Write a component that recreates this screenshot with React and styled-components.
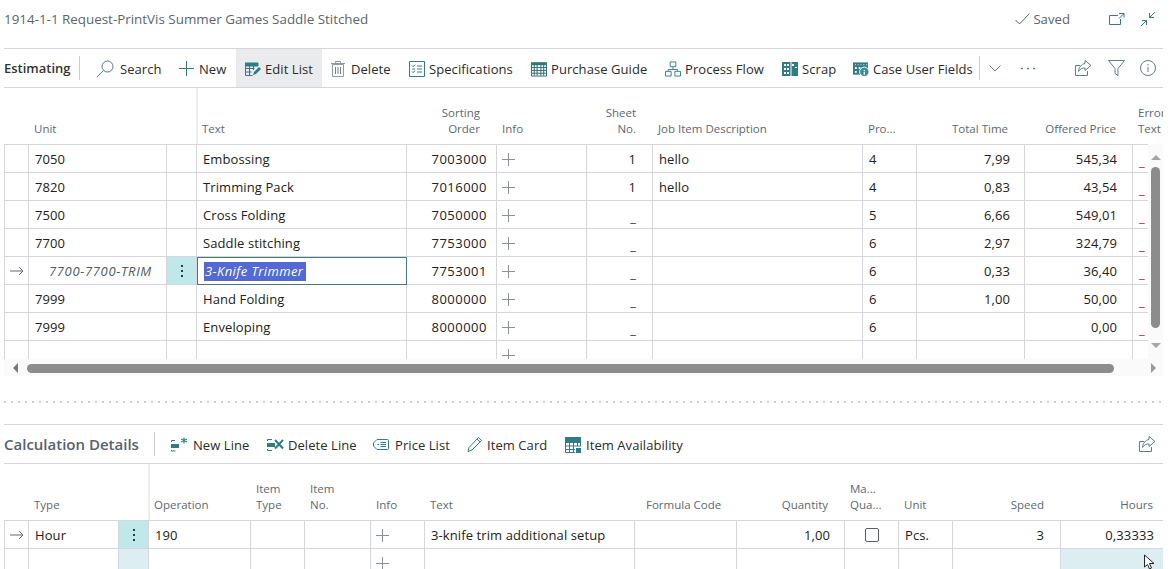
import React from "react";
import styled, { createGlobalStyle } from "styled-components";

const TEAL = "#2f7d84";
const LINE = "#d5d6de";
const SOFT = "#5d7f88";

const GlobalStyle = createGlobalStyle`
  html, body {
    margin: 0;
    background: #fff;
    font-family: "Open Sans", "Liberation Sans", sans-serif;
    color: #212121;
  }
`;

const Page = styled.div`
  position: relative;
  width: 1173px;
  height: 569px;
  padding: 0 10px 0 4px;
  box-sizing: border-box;
  overflow: hidden;
`;

const TitleBar = styled.div`
  height: 48px;
  display: flex;
  align-items: center;
  padding-bottom: 10px;
  box-sizing: border-box;
`;

const Title = styled.div`
  font-size: 13.4px;
  color: #5b6570;
  flex: 1;
`;

const Saved = styled.div`
  display: flex;
  align-items: center;
  gap: 3px;
  font-size: 13.2px;
  color: #5b6570;
  margin-right: 31px;
`;

const TitleIcon = styled.span`
  display: flex;
  width: 31px;
  justify-content: center;
`;

const Toolbar = styled.div`
  height: ${(p) => p.$height}px;
  display: flex;
  align-items: center;
  border-top: 1px solid ${LINE};
  border-bottom: 1px solid ${LINE};
  box-sizing: border-box;
`;

const SectionName = styled.div`
  width: ${(p) => p.$width}px;
  font-size: ${(p) => p.$size}px;
  font-weight: 600;
  color: ${(p) => p.$color};
  white-space: nowrap;
`;

const Divider = styled.div`
  width: 1px;
  height: 24px;
  background: #c9cbd2;
  margin-right: ${(p) => p.$after || 0}px;
`;

const Action = styled.div`
  width: ${(p) => p.$width}px;
  height: 100%;
  flex: none;
  display: flex;
  align-items: center;
  padding: 1px 0 0 9px;
  box-sizing: border-box;
  font-size: 13px;
  letter-spacing: 0.07px;
  white-space: nowrap;
  color: #2b2b2b;
  background: ${(p) => (p.$active ? "#eaebec" : "transparent")};
`;

const ActionIcon = styled.span`
  width: ${(p) => p.$slot}px;
  margin-right: 4px;
  flex: none;
  display: flex;
  align-items: center;
`;

const IconButton = styled.span`
  width: ${(p) => p.$width}px;
  flex: none;
  display: flex;
  justify-content: center;
  align-items: center;
`;

const Spacer = styled.div`
  flex: 1;
`;

const GridWrap = styled.div`
  position: relative;
  height: ${(p) => p.$height}px;
  overflow: hidden;
`;

const Row = styled.div`
  display: grid;
  grid-template-columns: ${(p) => p.$cols};
  height: 28px;
  box-sizing: border-box;
`;

const HeaderRow = styled.div`
  display: grid;
  grid-template-columns: ${(p) => p.$cols};
  height: 57px;
  box-sizing: border-box;
  border-bottom: 1px solid ${LINE};
`;

const HeaderCell = styled.div`
  display: flex;
  align-items: flex-end;
  justify-content: ${(p) => (p.$align === "right" ? "flex-end" : "flex-start")};
  text-align: ${(p) => p.$align || "left"};
  padding: 0 ${(p) => (p.$align === "right" ? p.$pad ?? 17 : 0)}px 7px ${(p) => (p.$align === "right" ? 0 : p.$pad ?? 5)}px;
  font-size: 11.5px;
  line-height: 16px;
  color: #5c6875;
  white-space: pre;
  overflow: hidden;
  box-sizing: border-box;
  border-left: ${(p) => (p.$frozen ? "2px solid #eeeef1" : "none")};
  margin-left: ${(p) => (p.$frozen ? "-1px" : "0")};
`;

const Cell = styled.div`
  display: flex;
  align-items: center;
  justify-content: ${(p) => (p.$align === "right" ? "flex-end" : "flex-start")};
  padding: 0 ${(p) => (p.$align === "right" ? p.$pad ?? 15 : 0)}px 0 ${(p) => (p.$align === "right" ? 0 : p.$pad ?? 6)}px;
  font-size: 13px;
  letter-spacing: ${(p) => p.$spacing || (p.$italic ? "0.65px" : "0.1px")};
  font-style: ${(p) => (p.$italic ? "italic" : "normal")};
  color: ${(p) => (p.$italic ? "#4c5a66" : "#212121")};
  white-space: nowrap;
  overflow: hidden;
  box-sizing: border-box;
  border-right: 1px solid ${LINE};
  border-bottom: 1px solid ${LINE};
  border-left: ${(p) => (p.$first ? `1px solid ${LINE}` : "none")};
  background: ${(p) => p.$bg || "transparent"};
`;

const Dash = styled.span`
  color: ${(p) => p.$color || "#333"};
  position: relative;
  top: 2px;
`;

const EditCell = styled.div`
  display: flex;
  align-items: center;
  padding-left: 6px;
  font-size: 13px;
  font-style: italic;
  letter-spacing: 0.4px;
  box-sizing: border-box;
  border: 1px solid #47797e;
`;

const Selected = styled.span`
  background: #5369d3;
  color: #fff;
  line-height: 19px;
  padding: 0 3px 0 1px;
`;

const Dots = styled.span`
  display: flex;
  flex-direction: column;
  gap: 3px;
  margin: 0 auto;
  i {
    width: 2px;
    height: 2px;
    background: #2b3a40;
    display: block;
  }
`;

const InfoMark = styled.span`
  display: flex;
  margin: 1px 0 0 1px;
`;

const VScroll = styled.div`
  position: absolute;
  top: 56px;
  right: 0;
  width: 15px;
  bottom: 0;
  background: #fafafa;
  padding: 23px 3px 0 3px;
  box-sizing: border-box;
`;

const VThumb = styled.div`
  width: 9px;
  height: 161px;
  background: #8c8c8c;
  border-radius: 5px;
`;

const Arrow = styled.div`
  position: absolute;
  width: 0;
  height: 0;
  border: 5px solid transparent;
  ${(p) => p.$dir === "up" && "top: 11px; left: 3px; border-top: 0; border-bottom: 5px solid #a6a6a6;"}
  ${(p) => p.$dir === "down" && "bottom: 11px; left: 3px; border-bottom: 0; border-top: 5px solid #a6a6a6;"}
  ${(p) => p.$dir === "left" && "top: 4px; left: 9px; border-left: 0; border-right: 5px solid #777;"}
  ${(p) => p.$dir === "right" && "top: 4px; right: 7px; border-right: 0; border-left: 5px solid #999;"}
`;

const HScroll = styled.div`
  position: relative;
  height: 17px;
  background: #fafafa;
  padding: 5px 0 0 23px;
  box-sizing: border-box;
`;

const HThumb = styled.div`
  width: 1087px;
  height: 9px;
  background: #8c8c8c;
  border-radius: 5px;
`;

const Splitter = styled.div`
  height: 48px;
  display: flex;
  align-items: center;
  padding-top: 3px;
  box-sizing: border-box;
  &::after {
    content: "";
    width: 100%;
    height: 2px;
    background: repeating-linear-gradient(to right, #cfd0d4 0 2px, transparent 2px 7px);
  }
`;

const Check = styled.span`
  width: 12px;
  height: 12px;
  border: 1px solid #55606a;
  border-radius: 2px;
  margin: 0 auto;
  display: block;
`;

const Pointer = styled.svg`
  position: absolute;
  left: 1143px;
  top: 554px;
`;

const Svg = ({ w = 16, h = 16, vb, children, ...rest }) => (
  <svg width={w} height={h} viewBox={vb || `0 0 ${w} ${h}`} fill="none" stroke={TEAL} strokeWidth="1" {...rest}>
    {children}
  </svg>
);

const SearchIcon = () => (
  <Svg w={18} h={18}>
    <circle cx="11.5" cy="6.5" r="5.5" stroke="#4f7b84" />
    <path d="M7.5 10.5 1 17" stroke="#4f7b84" />
  </Svg>
);
const PlusIcon = ({ size = 15, color = TEAL }) => (
  <Svg w={size} h={size}>
    <path d={`M${size / 2} 0V${size}M0 ${size / 2}H${size}`} stroke={color} />
  </Svg>
);
const EditListIcon = () => (
  <Svg>
    <path d="M0 2h13v3H0z" fill={TEAL} />
    <path d="M.5 2v12.5h7M4.5 5v9M8.5 5v4M.5 7.5h9M.5 11h6" />
    <path d="M8 14l1-3 5-5 2 2-5 5z" fill={TEAL} stroke="none" />
  </Svg>
);
const TrashIcon = () => (
  <Svg w={14} h={18}>
    <path d="M1.500 4.500h11v12h-11zM0 3.500h14M4.500 3V1.500h5V3" stroke="#8b9ba1" />
    <path d="M4.500 7v7M7 7v7M9.500 7v7" stroke="#75858c" />
  </Svg>
);
const SpecsIcon = () => (
  <Svg>
    <path d="M.5.5h15v15H.5z" />
    <path d="M3 4.500l1.200 1.200L6 3.500M3 10.500l1.200 1.200L6 9.500M8 5h5M8 8h5M8 11h5M3 8h3" />
  </Svg>
);
const TableIcon = () => (
  <Svg w={17} h={16}>
    <path d="M.5 1.500h16v14H.5z" stroke="#27656c" />
    <path d="M0 1h17v3H0z" fill={TEAL} stroke="none" />
    <path d="M3.500 2v13M6.500 2v13M10.500 2v13M13.500 2v13M1 6.500h15M1 9.500h15M1 12.500h15" stroke="#27656c" />
  </Svg>
);
const FlowIcon = () => (
  <Svg w={17} h={16}>
    <path d="M5.500.5h6v5h-6zM.5 10.500h6v5h-6zM10.500 10.500h6v5h-6zM8.500 6v2.500M3.500 10V8.500h10V10" />
  </Svg>
);
const ScrapIcon = () => (
  <Svg>
    <path d="M0 1h16v14H0z" fill={TEAL} stroke="none" />
    <path d="M2 3h2v2H2zM5 3h2v2H5zM2 7h2v2H2zM5 7h2v2H5zM2 11h2v2H2zM5 11h2v2H5zM10 3h2v2h-2zM13 6h2v1h-2z" fill="#fff" stroke="none" />
    <path d="M9 1v14" stroke="#fff" />
  </Svg>
);
const CaseIcon = () => (
  <Svg w={17} h={16}>
    <path d="M0 1h16v13H0z" fill={TEAL} stroke="none" />
    <path d="M2 3h1v1H2zM5 3h1v1H5zM8 3h1v1H8zM11 3h1v1h-1zM14 3h1v1h-1zM2 6h2v2H2zM2 10h2v2H2zM6 6h2v2H6zM10 6h2v2h-2z" fill="#fff" stroke="none" />
    <circle cx="12" cy="11" r="5" fill="#3f8a92" stroke="#fff" />
    <path d="M12 9v1M12 11v3" stroke="#fff" strokeWidth="1.400" />
  </Svg>
);
const CheckMark = () => (
  <Svg w={15} h={12}>
    <path d="M.5 7l4 4L14.500 .5" stroke="#5b6570" />
  </Svg>
);
const OpenIcon = () => (
  <Svg w={16} h={14}>
    <path d="M9 3.500H.5v9h11V7" />
    <path d="M10 1.500h5v4M15 1.500l-5 5" />
  </Svg>
);
const CollapseIcon = () => (
  <Svg w={16} h={16}>
    <path d="M15 1 9.500 6.500M9.500 2v4.500H14M1 15l5.500-5.500M2 9.500h4.500V14" />
  </Svg>
);
const ShareIcon = () => (
  <Svg w={17} h={16}>
    <path d="M5 5.500H.5v10h12V11" stroke={SOFT} />
    <path d="M10 .5l6 5-6 5V8C7 8 5 9 3.500 11.500 4 7 6.500 4 10 3.500z" stroke={SOFT} />
  </Svg>
);
const FilterIcon = () => (
  <Svg w={17} h={16}>
    <path d="M.5 .5h16l-6.500 8v7l-3-2v-5z" stroke={SOFT} />
  </Svg>
);
const InfoIcon = () => (
  <Svg w={16} h={16}>
    <circle cx="8" cy="8" r="7.500" stroke={SOFT} />
    <path d="M8 7v5M8 4v1.500" stroke={SOFT} />
  </Svg>
);
const Chevron = () => (
  <Svg w={12} h={7}>
    <path d="M.5 .5 6 6 11.500 .5" stroke={SOFT} />
  </Svg>
);
const More = () => (
  <Svg w={14} h={3}>
    <path d="M0 1.500h2M6 1.500h2M12 1.500h2" stroke={SOFT} strokeWidth="1.500" />
  </Svg>
);
const NewLineIcon = () => (
  <Svg w={18} h={15}>
    <path d="M0 7h8v4H0z" fill={TEAL} stroke="none" />
    <path d="M.5 5V3.500H4M.5 13v1h4" />
    <path d="M13 .5v6M10 2l6 3M16 2l-6 3" strokeWidth="1.200" />
  </Svg>
);
const DeleteLineIcon = () => (
  <Svg w={17} h={15}>
    <path d="M0 6h8v4H0z" fill={TEAL} stroke="none" />
    <path d="M.5 4V2.500H5M.5 12v1.500H5" />
    <path d="M8 3l8 8.500M16 3l-8 8.500" strokeWidth="2" />
  </Svg>
);
const PriceIcon = () => (
  <Svg w={16} h={11}>
    <path d="M4 .5h10.500a1 1 0 0 1 1 1v8a1 1 0 0 1-1 1H4L.5 7V4z" />
    <path d="M4.500 5.500H6M7.500 3.500h5.500M7.500 5.500h5.500M7.500 7.500h5.500" />
  </Svg>
);
const PencilIcon = () => (
  <Svg w={16} h={17}>
    <path d="M11.500 1.500l3 3L5 14l-4 1.500L2 11.500zM10 3l3 3" />
  </Svg>
);
const AvailabilityIcon = () => (
  <Svg w={16} h={16}>
    <path d="M0 0h16v5H0z" fill={TEAL} stroke="none" />
    <path d="M.5 1v14.500H10M4.500 1v14M8.500 1v14M12.500 1v8M1 5.500h15M1 9h15M1 12.500h9M15.500 1v8" />
    <path d="M11 11h5v5h-5z" fill={TEAL} stroke="none" />
  </Svg>
);

const topActions = [
  { label: "Search", icon: <SearchIcon />, slot: 20, width: 83 },
  { label: "New", icon: <PlusIcon />, slot: 16, width: 66 },
  { label: "Edit List", icon: <EditListIcon />, slot: 16, width: 86, active: true },
  { label: "Delete", icon: <TrashIcon />, slot: 16, width: 78 },
  { label: "Specifications", icon: <SpecsIcon />, slot: 16, width: 122 },
  { label: "Purchase Guide", icon: <TableIcon />, slot: 16, width: 134 },
  { label: "Process Flow", icon: <FlowIcon />, slot: 16, width: 117 },
  { label: "Scrap", icon: <ScrapIcon />, slot: 16, width: 71 },
  { label: "Case User Fields", icon: <CaseIcon />, slot: 16, width: 135 },
];

const bottomActions = [
  { label: "New Line", icon: <NewLineIcon />, slot: 18, width: 96 },
  { label: "Delete Line", icon: <DeleteLineIcon />, slot: 17, width: 106 },
  { label: "Price List", icon: <PriceIcon />, slot: 18, width: 94 },
  { label: "Item Card", icon: <PencilIcon />, slot: 16, width: 98 },
  { label: "Item Availability", icon: <AvailabilityIcon />, slot: 17, width: 130 },
];

const topCols = "25px 138px 30px 210px 90px 90px 66px 210px 54px 108px 108px 40px";
const bottomCols = "25px 90px 30px 102px 54px 66px 54px 210px 102px 108px 54px 54px 108px 103px";

const topHeader = [
  { t: "" },
  { t: "Unit" },
  { t: "" },
  { t: "Text", frozen: true, pad: 4 },
  { t: "Sorting\nOrder", align: "right" },
  { t: "Info" },
  { t: "Sheet\nNo.", align: "right" },
  { t: "Job Item Description" },
  { t: "Pro..." },
  { t: "Total Time", align: "right" },
  { t: "Offered Price", align: "right" },
  { t: "Error\nText" },
];

const topRows = [
  ["7050", "Embossing", "7003000", "1", "hello", "4", "7,99", "545,34"],
  ["7820", "Trimming Pack", "7016000", "1", "hello", "4", "0,83", "43,54"],
  ["7500", "Cross Folding", "7050000", "_", "", "5", "6,66", "549,01"],
  ["7700", "Saddle stitching", "7753000", "_", "", "6", "2,97", "324,79"],
  ["7700-7700-TRIM", "3-Knife Trimmer", "7753001", "_", "", "6", "0,33", "36,40"],
  ["7999", "Hand Folding", "8000000", "_", "", "6", "1,00", "50,00"],
  ["7999", "Enveloping", "8000000", "_", "", "6", "", "0,00"],
  ["", "", "", "", "", "", "", ""],
];

const bottomHeader = [
  { t: "" },
  { t: "Type" },
  { t: "" },
  { t: "Operation", frozen: true, pad: 4 },
  { t: "Item\nType" },
  { t: "Item\nNo." },
  { t: "Info" },
  { t: "Text" },
  { t: "Formula Code", pad: 11 },
  { t: "Quantity", align: "right" },
  { t: "Ma...\nQua..." },
  { t: "Unit" },
  { t: "Speed", align: "right" },
  { t: "Hours", align: "right", pad: 11 },
];

const RowArrow = () => (
  <Svg w={14} h={10}>
    <path d="M0 5h13M9 1l4 4-4 4" stroke="#5f6b74" />
  </Svg>
);

const InfoPlus = () => (
  <InfoMark>
    <PlusIcon size={13} color="#8a9298" />
  </InfoMark>
);

const MenuDots = () => (
  <Dots>
    <i />
    <i />
    <i />
  </Dots>
);

function TopRow({ row, current, blank }) {
  const [unit, text, sort, sheet, job, pro, time, price] = row;
  return (
    <Row $cols={topCols}>
      <Cell $first $pad={5}>
        {current && <RowArrow />}
      </Cell>
      <Cell $italic={current} $pad={current ? 20 : 6}>
        {unit}
      </Cell>
      <Cell $bg={current ? "#bfe8ea" : undefined} $pad={0}>
        {current && <MenuDots />}
      </Cell>
      {current ? (
        <EditCell>
          <Selected>{text}</Selected>
        </EditCell>
      ) : (
        <Cell>{text}</Cell>
      )}
      <Cell $align="right" $pad={9} $spacing="0.5px">
        {sort}
      </Cell>
      <Cell $pad={4}>
        <InfoPlus />
      </Cell>
      <Cell $align="right" $pad={16}>
        {sheet === "_" ? <Dash>_</Dash> : sheet}
      </Cell>
      <Cell>{job}</Cell>
      <Cell>{pro}</Cell>
      <Cell $align="right" $pad={14}>
        {time}
      </Cell>
      <Cell $align="right">{price}</Cell>
      <Cell>{!blank && <Dash $color="#b3262e">_</Dash>}</Cell>
    </Row>
  );
}

function BottomRow({ blank }) {
  return (
    <Row $cols={bottomCols}>
      <Cell $first $pad={5}>
        {!blank && <RowArrow />}
      </Cell>
      <Cell>{!blank && "Hour"}</Cell>
      <Cell $bg={blank ? "#dceef1" : "#bfe8ea"} $pad={0}>
        {!blank && <MenuDots />}
      </Cell>
      <Cell>{!blank && "190"}</Cell>
      <Cell />
      <Cell />
      <Cell $pad={4}>
        <InfoPlus />
      </Cell>
      <Cell>{!blank && "3-knife trim additional setup"}</Cell>
      <Cell />
      <Cell $align="right" $pad={14}>
        {!blank && "1,00"}
      </Cell>
      <Cell $pad={0}>{!blank && <Check />}</Cell>
      <Cell $pad={6}>{!blank && "Pcs."}</Cell>
      <Cell $align="right" $pad={16}>
        {!blank && "3"}
      </Cell>
      <Cell $align="right" $pad={9} $bg={blank ? "#dceef1" : undefined}>
        {!blank && "0,33333"}
      </Cell>
    </Row>
  );
}

export default function App() {
  return (
    <Page>
      <GlobalStyle />
      <TitleBar>
        <Title>1914-1-1 Request-PrintVis Summer Games Saddle Stitched</Title>
        <Saved>
          <CheckMark />
          Saved
        </Saved>
        <TitleIcon>
          <OpenIcon />
        </TitleIcon>
        <TitleIcon>
          <CollapseIcon />
        </TitleIcon>
      </TitleBar>

      <Toolbar $height={40}>
        <SectionName $width={75} $size={13} $color="#333">
          Estimating
        </SectionName>
        <Divider $after={7} />
        {topActions.map((a) => (
          <Action key={a.label} $width={a.width} $active={a.active}>
            <ActionIcon $slot={a.slot}>{a.icon}</ActionIcon>
            {a.label}
          </Action>
        ))}
        <Divider />
        <IconButton $width={30}>
          <Chevron />
        </IconButton>
        <IconButton $width={36}>
          <More />
        </IconButton>
        <Spacer />
        <IconButton $width={34}>
          <ShareIcon />
        </IconButton>
        <IconButton $width={33}>
          <FilterIcon />
        </IconButton>
        <IconButton $width={30}>
          <InfoIcon />
        </IconButton>
      </Toolbar>

      <GridWrap $height={271}>
        <HeaderRow $cols={topCols}>
          {topHeader.map((h, i) => (
            <HeaderCell key={i} $align={h.align} $pad={h.pad} $frozen={h.frozen}>
              {h.t}
            </HeaderCell>
          ))}
        </HeaderRow>
        {topRows.map((r, i) => (
          <TopRow key={i} row={r} current={i === 4} blank={i === 7} />
        ))}
        <VScroll>
          <Arrow $dir="up" />
          <VThumb />
          <Arrow $dir="down" />
        </VScroll>
      </GridWrap>
      <HScroll>
        <Arrow $dir="left" />
        <HThumb />
        <Arrow $dir="right" />
      </HScroll>
      <Splitter />

      <Toolbar $height={40}>
        <SectionName $width={150} $size={15} $color="#56626e">
          Calculation Details
        </SectionName>
        <Divider $after={7} />
        {bottomActions.map((a) => (
          <Action key={a.label} $width={a.width}>
            <ActionIcon $slot={a.slot}>{a.icon}</ActionIcon>
            {a.label}
          </Action>
        ))}
        <Spacer />
        <IconButton $width={32}>
          <ShareIcon />
        </IconButton>
      </Toolbar>

      <GridWrap $height={105}>
        <HeaderRow $cols={bottomCols}>
          {bottomHeader.map((h, i) => (
            <HeaderCell key={i} $align={h.align} $pad={h.pad} $frozen={h.frozen}>
              {h.t}
            </HeaderCell>
          ))}
        </HeaderRow>
        <BottomRow />
        <BottomRow blank />
      </GridWrap>

      <Pointer width="14" height="16" viewBox="0 0 14 16">
        <path d="M1.500 1v12l3-2.500 2 4.500 2-1-2-4.500H11z" fill="#fff" stroke="#222" />
      </Pointer>
    </Page>
  );
}
